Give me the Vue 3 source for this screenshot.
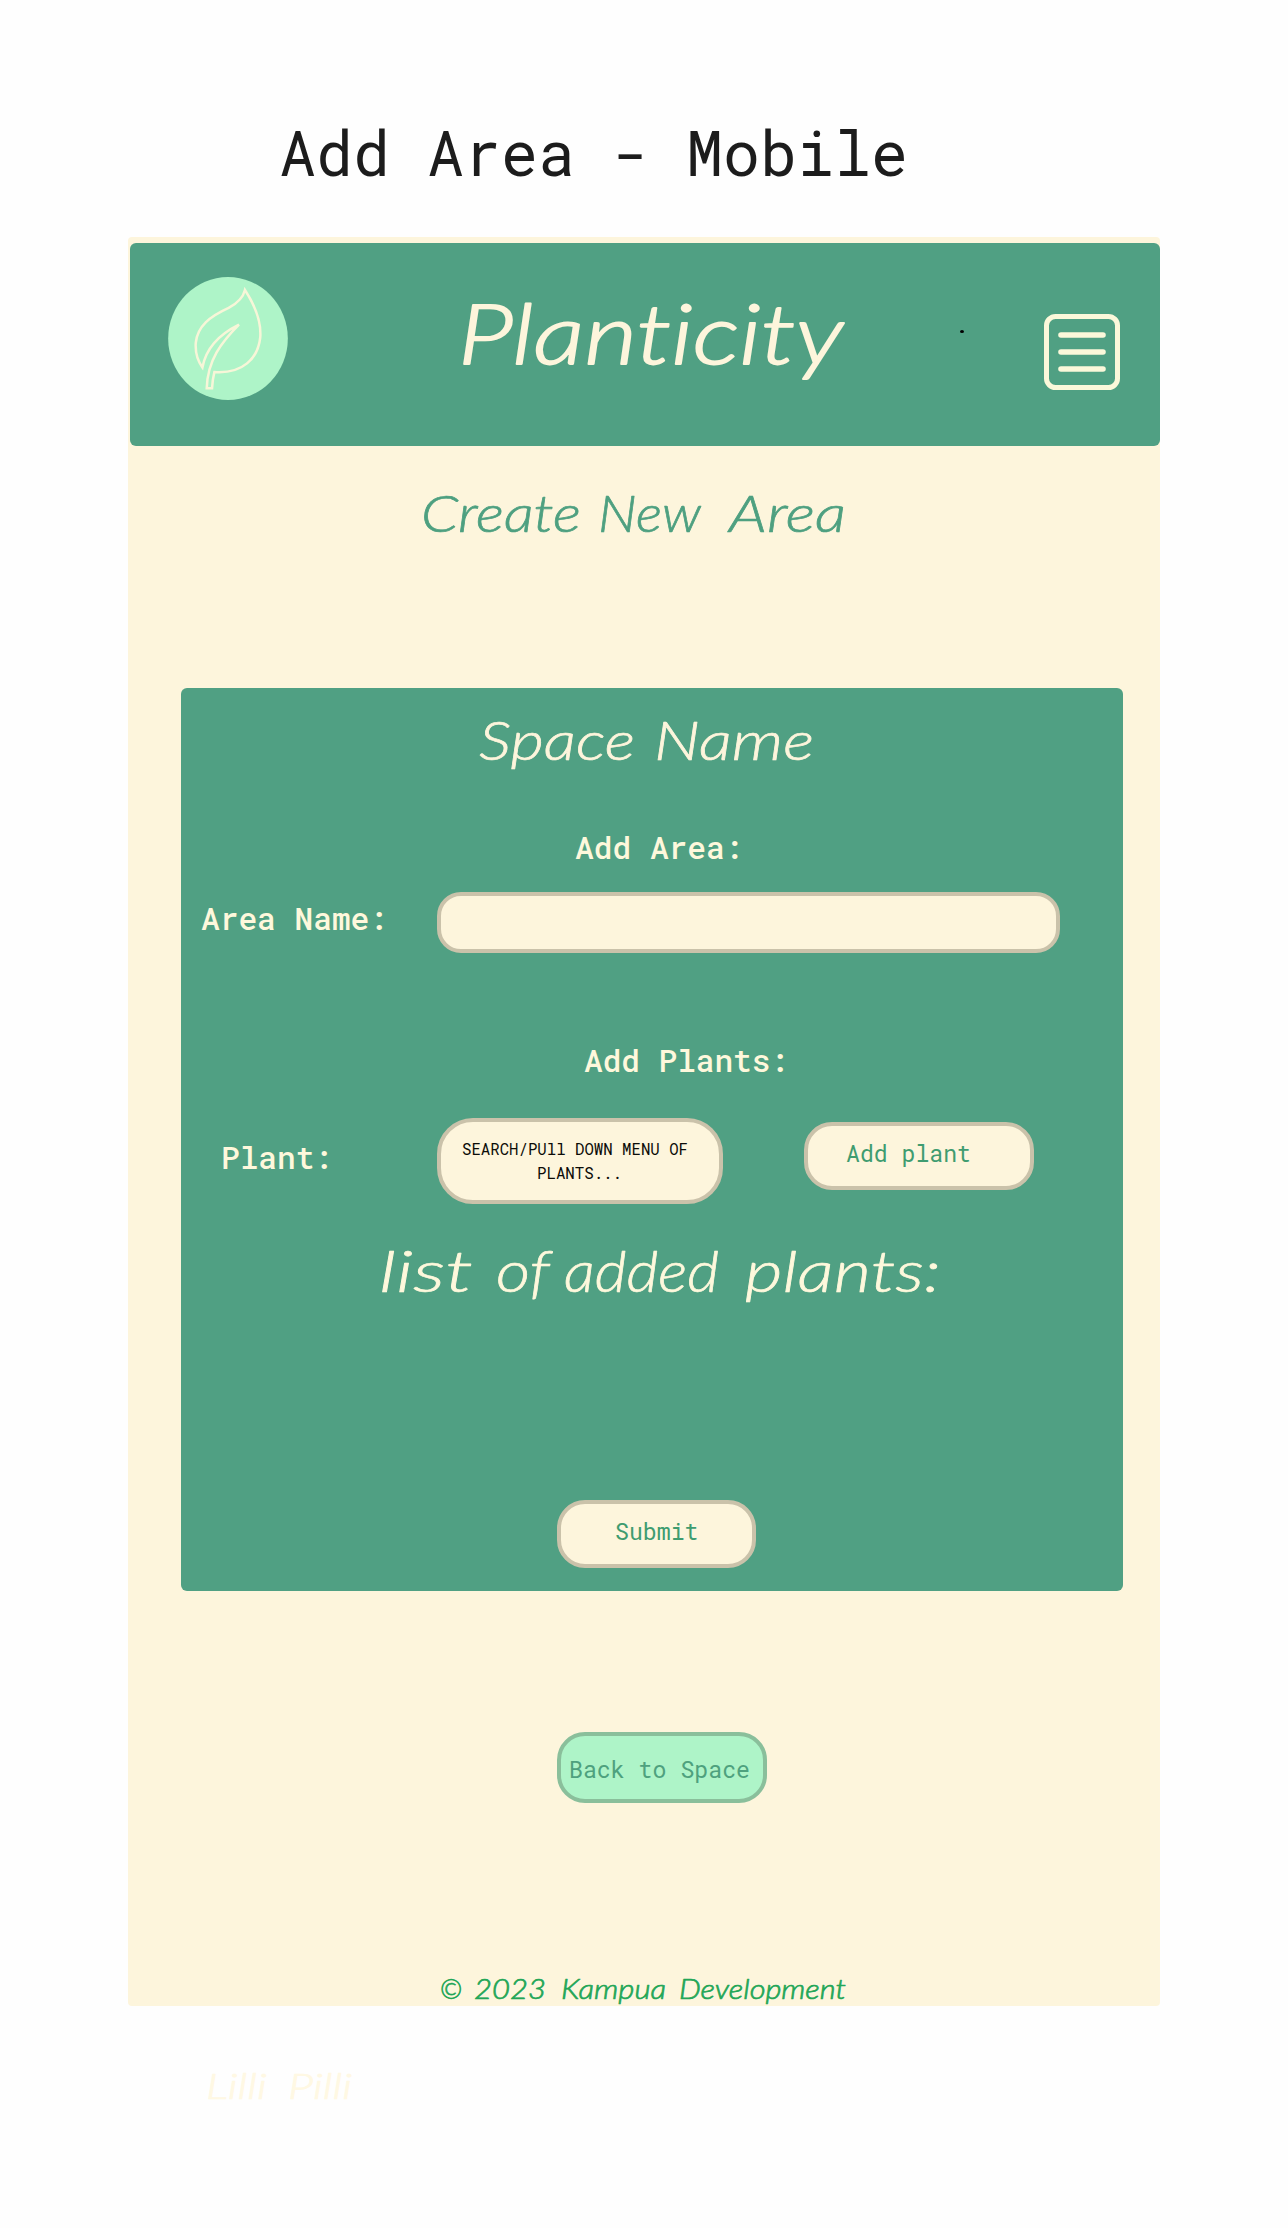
<script setup>
import { h } from 'vue'

// One line of lettering: every run is [text, x, width], sitting on a shared baseline.
const Lettering = (props) =>
  h('svg', { width: props.width, height: props.height, overflow: 'visible' }, [
    h(
      'g',
      { transform: `translate(0 ${props.base}) scale(1 ${props.stretch || 1})`, fill: 'currentColor' },
      props.runs.map(([text, x, w]) =>
        h('text', { x, y: 0, textLength: w, lengthAdjust: 'spacingAndGlyphs' }, text),
      ),
    ),
  ])
Lettering.props = ['width', 'height', 'base', 'runs', 'stretch']

const tall = 1.03
</script>

<template>
  <main class="board">
    <Lettering class="mono board-title" :width="630" :height="60" :base="54" :stretch="tall"
      :runs="[['Add Area - Mobile', 0, 629]]" />

    <div class="screen">
      <header class="bar">
        <svg class="logo" width="120" height="123" viewBox="174 170 360 370">
          <ellipse cx="354" cy="355" rx="180" ry="185" fill="#aef4c8" />
          <path
            d="M405 209C399 234 382 249 356 263C299 289 262 318 257 368C255 400 264 424 277 442C285 398 312 350 387 313C335 365 292 420 290 505L306 505C307 488 309 472 313 456C398 462 444 415 451 352C455 300 435 255 405 209Z"
            fill="none" stroke="#f7f6d8" stroke-width="7.5" stroke-linejoin="miter" />
        </svg>
        <Lettering class="script brand" :width="381" :height="70" :base="66" :runs="[['Planticity', -3, 385]]" />
        <span class="dot"></span>
        <svg class="menu" width="76" height="76" viewBox="0 0 76 76" fill="none" stroke="#fbf8da">
          <rect x="2.5" y="2.5" width="71" height="71" rx="9" stroke-width="5" />
          <path d="M17 21H59M17 38H59M17 55H59" stroke-width="5.6" stroke-linecap="round" />
        </svg>
      </header>

      <Lettering class="script heading" :width="424" :height="50" :base="46"
        :runs="[['Create', -1, 160], ['New', 176, 103], ['Area', 307, 117]]" />

      <section class="panel">
        <Lettering class="script space" :width="334" :height="50" :base="45"
          :runs="[['Space', -1, 156], ['Name', 174, 160]]" />
        <Lettering class="mono label add-area" :width="169" :height="30" :base="25" :stretch="tall"
          :runs="[['Add Area:', 0, 168.5]]" />
        <div class="row area-row">
          <Lettering class="mono label area-label" :width="187" :height="30" :base="25" :stretch="tall"
            :runs="[['Area Name:', 0, 187]]" />
          <div class="pill field"></div>
        </div>
        <Lettering class="mono label add-plants" :width="205" :height="30" :base="25" :stretch="tall"
          :runs="[['Add Plants:', 0, 205]]" />
        <div class="row plant-row">
          <Lettering class="mono label plant-label" :width="112" :height="30" :base="25" :stretch="tall"
            :runs="[['Plant:', 0, 112]]" />
          <div class="pill picker">
            <Lettering class="mono" :width="226" :height="24" :base="16" :stretch="tall"
              :runs="[['SEARCH/PUll DOWN MENU OF', 0, 226]]" />
            <Lettering class="mono" :width="226" :height="24" :base="16" :stretch="tall"
              :runs="[['PLANTS...', 75, 85]]" />
          </div>
          <div class="pill add">
            <Lettering class="mono" :width="125" :height="26" :base="20" :stretch="tall"
              :runs="[['Add plant', 0, 125]]" />
          </div>
        </div>
        <Lettering class="script list" :width="562" :height="60" :base="48"
          :runs="[['list', 0, 94], ['of', 117, 54], ['added', 185, 155], ['plants:', 366, 196]]" />
        <div class="pill submit">
          <Lettering class="mono" :width="84" :height="26" :base="20" :stretch="tall"
            :runs="[['Submit', 0, 83.5]]" />
        </div>
      </section>

      <div class="pill back">
        <Lettering class="mono" :width="181" :height="26" :base="20" :stretch="tall"
          :runs="[['Back to Space', 0, 181]]" />
      </div>

      <Lettering class="script footer" :width="406" :height="30" :base="24"
        :runs="[['©', 0, 22], ['2023', 34, 72], ['Kampua', 121, 105], ['Development', 239, 167]]" />
    </div>

    <Lettering class="script plant-name" :width="146" :height="34" :base="31"
      :runs="[['Lilli', 0, 61], ['Pilli', 82, 64]]" />
  </main>
</template>

<style>
body {
  background: #fefefe;
}
</style>

<style scoped>
.board {
  width: 1288px;
  height: 2228px;
  overflow: hidden;
  display: flex;
  flex-direction: column;
  align-items: flex-start;
  background: #fefefe;
}
.board svg {
  display: block;
  flex: none;
}
.mono {
  font-family: "Roboto Mono", "Liberation Mono", monospace;
}
.script {
  font-family: "Lato", sans-serif;
  font-style: italic;
  font-weight: 300;
  font-size: 51px;
  font-variant-ligatures: none;
  color: #fdf5dc;
}
.script :deep(text) {
  stroke: currentColor;
  stroke-width: 0.7px;
  stroke-linejoin: round;
}
.board-title {
  margin: 122px 0 0 279px;
  font-size: 61.7px;
  color: #1c1c1c;
}
.screen {
  width: 1032px;
  height: 1769px;
  margin: 55px 0 0 128px;
  border-radius: 4px;
  background: #fdf5dc;
  display: flex;
  flex-direction: column;
  align-items: flex-start;
}
.bar {
  width: 1030px;
  height: 203px;
  margin: 6px 0 0 2px;
  border-radius: 6px;
  background: #50a083;
  display: flex;
  align-items: flex-start;
}
.logo {
  margin: 34px 0 0 38px;
}
.brand {
  margin: 55px 0 0 173px;
  font-size: 82px;
}
.brand :deep(text) {
  stroke-width: 1.8px;
}
.dot {
  width: 4px;
  height: 3px;
  margin: 87px 0 0 118px;
  border-radius: 50%;
  background: #000;
}
.menu {
  margin: 71px 0 0 80px;
}
.heading {
  margin: 40px 0 0 294px;
  color: #4ea080;
}
.panel {
  width: 942px;
  height: 903px;
  margin: 152px 0 0 53px;
  border-radius: 6px;
  background: #50a083;
  display: flex;
  flex-direction: column;
  align-items: flex-start;
}
.space {
  margin: 27px 0 0 299px;
  font-size: 54px;
}
.label {
  font-size: 31.2px;
  font-weight: 500;
  color: #fef8dc;
}
.add-area {
  margin: 69px 0 0 394px;
}
.row {
  display: flex;
  align-items: flex-start;
}
.area-row {
  margin-top: 28px;
}
.area-label {
  margin: 13px 0 0 20px;
}
.pill {
  box-sizing: border-box;
  border: 4px solid #cac2aa;
  background: #fdf5dc;
  font-size: 23.1px;
  color: #3f9c70;
}
.field {
  width: 623px;
  height: 61px;
  margin-left: 49px;
  border-radius: 24px;
}
.add-plants {
  margin: 94px 0 0 403px;
}
.plant-row {
  margin-top: 41px;
}
.plant-label {
  margin: 26px 0 0 40px;
}
.picker {
  width: 286px;
  height: 86px;
  margin-left: 104px;
  padding: 17px 0 0 21px;
  border-radius: 36px;
  font-size: 15.7px;
  color: #0c0c08;
}
.add {
  width: 230px;
  height: 68px;
  margin: 4px 0 0 81px;
  padding: 16px 0 0 38px;
  border-radius: 28px;
}
.list {
  margin: 40px 0 0 198px;
  font-size: 57px;
  color: #fef8dc;
}
.submit {
  width: 199px;
  height: 68px;
  margin: 196px 0 0 376px;
  padding: 16px 0 0 54px;
  border-radius: 28px;
}
.back {
  width: 210px;
  height: 71px;
  margin: 141px 0 0 429px;
  padding: 22px 0 0 8px;
  border-radius: 28px;
  border-color: #8abf9b;
  background: #aef4c8;
  color: #4ea17e;
}
.footer {
  margin: 172px 0 0 312px;
  font-size: 28px;
  color: #22a657;
}
.plant-name {
  margin: 62px 0 0 206px;
  font-size: 36px;
  color: #fff8e3;
}
</style>
